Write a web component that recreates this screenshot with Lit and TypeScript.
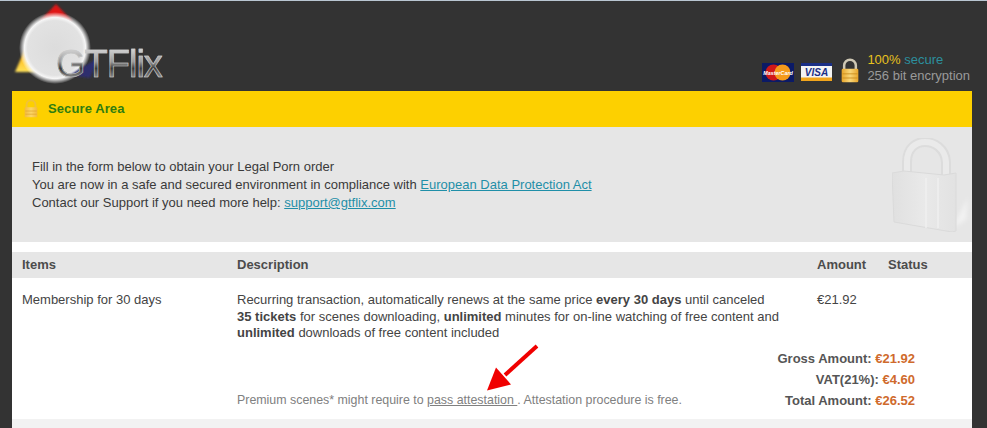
import { LitElement, html, css, svg } from "lit";
import { customElement } from "lit/decorators.js";

const lockSmall = (id: string, w: number, h: number, shackle: string, a: string, b: string, line: string) => svg`
<svg width=${w} height=${h} viewBox="0 0 24 30" aria-hidden="true" style="display:block">
  <defs><linearGradient id=${id} x1="0" y1="0" x2="1" y2="0">
    <stop offset="0" stop-color=${a}/><stop offset=".5" stop-color=${b}/><stop offset="1" stop-color=${a}/>
  </linearGradient></defs>
  <path d="M5 14V9a7 7 0 0 1 14 0v5" fill="none" stroke=${shackle} stroke-width="3"/>
  <rect x="2" y="13" width="20" height="16" rx="1.5" fill="url(#${id})"/>
  <path d="M3 19h18M3 24h18" stroke=${line} stroke-width="1"/>
</svg>`;

@customElement("app-root")
export class AppRoot extends LitElement {
  static styles = css`
    :host { display: block; width: 987px; height: 428px; overflow: hidden; background: #333; font-family: "Liberation Sans", Arial, sans-serif; font-size: 13px; color: #444; }
    .topline { height: 1px; background: #b9c6d2; }
    .header { position: relative; height: 90px; display: flex; justify-content: flex-end; align-items: flex-end; padding-right: 17px; padding-bottom: 8px; box-sizing: border-box; }
    .logo { position: absolute; left: 12px; top: 0; width: 160px; height: 90px; }
    .logotext { position: absolute; left: 44px; top: 41px; font-size: 38px; line-height: 44px; letter-spacing: -1px; background: linear-gradient(#f4f4f4 0%, #9a9a9a 45%, #3a3a3a 60%, #d8d8d8 100%); -webkit-background-clip: text; background-clip: text; color: transparent; -webkit-text-stroke: 0.6px #c8c8c8; }
    .badges { display: flex; align-items: flex-end; }
    .mc { margin-right: 7px; margin-bottom: 1px; display: block; }
    .visa { margin-right: 8px; margin-bottom: 2px; display: block; }
    .lock { margin-right: 7px; display: block; }
    .sec { line-height: 15.5px; color: #9a9a9a; white-space: nowrap; }
    .pct { color: #e8c21e; }
    .secure { color: #2c8f9e; }
    .main { margin: 0 15px 0 12px; width: 960px; }
    .bar { height: 36px; background: #fdd000; display: flex; align-items: center; padding: 0 0 1px 10px; box-sizing: border-box; gap: 8px; color: #2f7d10; font-weight: bold; font-size: 13px; letter-spacing: 0.1px; }
    .intro { height: 115px; background: #e6e6e6; padding: 31px 20px 0; box-sizing: border-box; line-height: 18px; color: #3a3a3a; position: relative; }
    .intro a { color: #1f8fa8; }
    .biglock { position: absolute; right: 0; top: 11px; }
    .content { background: #fff; padding-top: 10px; height: 177px; box-sizing: border-box; }
    .grid { display: grid; grid-template-columns: 225px 580px 71px 84px; }
    .head { height: 26px; padding-bottom: 1px; background: #e6e6e6; font-weight: bold; align-items: center; display: flex; box-sizing: border-box; color: #4c4c4c; }
    .first { padding-left: 10px; }
    .row { padding-top: 14px; line-height: 16.5px; color: #444; }
    .foot { display: flex; justify-content: space-between; align-items: flex-end; padding: 0 57px 0 225px; position: relative; margin-top: 6px; }
    .note { color: #808080; line-height: 14px; padding-bottom: 4px; font-size: 12.4px; }
    .totals { text-align: right; font-weight: bold; color: #555; line-height: 21px; }
    .totals span { color: #cf6a2c; }
    .arrow { position: absolute; left: 470px; top: -7px; }
    .rest { height: 9px; background: #f2f2f2; }
  `;

  render() {
    return html`
      <div class="topline"></div>
      <div class="header">
        <div class="logo">
          <svg width="160" height="90" viewBox="0 0 160 90" aria-hidden="true">
            <defs>
              <radialGradient id="ball" cx=".5" cy=".5" r=".5">
                <stop offset="0" stop-color="#dcdcdc"/><stop offset=".76" stop-color="#e2e2e2"/><stop offset=".85" stop-color="#f6f6f6"/><stop offset="1" stop-color="#ffffff" stop-opacity="0"/>
              </radialGradient>
              <linearGradient id="yel" x1="0" y1="0" x2="0" y2="1"><stop offset="0" stop-color="#ffa800"/><stop offset="1" stop-color="#ffe25a"/></linearGradient>
              <filter id="soft" x="-30%" y="-30%" width="160%" height="160%"><feGaussianBlur stdDeviation="1.2"/></filter>
            </defs>
            <path d="M44 3L28 20h32z" fill="#e01818" filter="url(#soft)"/>
            <path d="M13 48L3 71h28z" fill="url(#yel)" filter="url(#soft)"/>
            <circle cx="43" cy="47" r="36" fill="url(#ball)"/>
            <path d="M58 74l28-17-8 20z" fill="#2e2e6e" filter="url(#soft)"/>
          </svg>
          <div class="logotext">GTFlix</div>
        </div>
        <div class="badges">
          <svg class="mc" width="32" height="19" viewBox="0 0 32 19" aria-hidden="true">
            <rect width="32" height="19" fill="#0b1a66"/>
            <circle cx="11.500" cy="9.500" r="8" fill="#d01818"/><circle cx="20.500" cy="9.500" r="8" fill="#f59a1b"/>
            <text x="16" y="11.500" text-anchor="middle" font-family="Liberation Sans" font-size="5.400" font-weight="bold" font-style="italic" fill="#fff">MasterCard</text>
          </svg>
          <svg class="visa" width="31" height="18" viewBox="0 0 31 18" aria-hidden="true">
            <rect width="31" height="18" fill="#f4f4f4"/><rect width="31" height="3" fill="#1a2f86"/><rect y="14.500" width="31" height="3.500" fill="#f2a51c"/>
            <text x="15.500" y="12.800" text-anchor="middle" font-family="Liberation Sans" font-size="10" font-weight="bold" font-style="italic" fill="#1a2f86">VISA</text>
          </svg>
          <span class="lock">${lockSmall("lk1", 20, 25, "#cfc8b4", "#e8a52a", "#f9d77a", "#c98a1a")}</span>
          <div class="sec"><span class="pct">100%</span> <span class="secure">secure</span><br />256 bit encryption</div>
        </div>
      </div>
      <div class="main">
        <div class="bar">${lockSmall("lk2", 18, 19, "#f0c23a", "#f3b93c", "#fbd668", "#dda22a")}<span>Secure Area</span></div>
        <div class="intro">
          Fill in the form below to obtain your Legal Porn order<br />
          You are now in a safe and secured environment in compliance with <a href="#">European Data Protection Act</a><br />
          Contact our Support if you need more help: <a href="#">support@gtflix.com</a>
          <svg class="biglock" width="80" height="94" viewBox="0 0 80 94" aria-hidden="true">
            <defs>
              <linearGradient id="bl" x1="0" y1="0" x2="1" y2="0"><stop offset="0" stop-color="#e0e0e0"/><stop offset=".5" stop-color="#e9e9e9"/><stop offset="1" stop-color="#e2e2e2"/></linearGradient>
              <filter id="sh" x="-30%" y="-30%" width="160%" height="160%"><feGaussianBlur stdDeviation="2"/></filter>
            </defs>
            <path d="M60 90L74 82 76 60z" fill="#f2f2f2" filter="url(#sh)"/>
            <path d="M15 40V24C15 10 24 4 33 4s20 6 21 20v20" fill="none" stroke="#dcdcdc" stroke-width="10"/>
            <path d="M15 40V24C15 10 24 4 33 4s20 6 21 20v20" fill="none" stroke="#eaeaea" stroke-width="6"/>
            <path d="M0 35l12-2 40 4 12-2v58l-4 1L2 84z" fill="url(#bl)" stroke="#dadada"/>
            <path d="M34 40v50M46 40v50" stroke="#efefef" stroke-width="1.500"/>
          </svg>
        </div>
        <div class="content">
          <div class="grid">
            <div class="head first">Items</div><div class="head">Description</div><div class="head">Amount</div><div class="head">Status</div>
            <div class="row first">Membership for 30 days</div>
            <div class="row">Recurring transaction, automatically renews at the same price <b>every 30 days</b> until canceled<br /><b>35 tickets</b> for scenes downloading, <b>unlimited</b> minutes for on-line watching of free content and<br /><b>unlimited</b> downloads of free content included</div>
            <div class="row">€21.92</div>
            <div class="row"></div>
          </div>
          <div class="foot">
            <div class="note">Premium scenes* might require to <u>pass attestation </u>. Attestation procedure is free.</div>
            <div class="totals">Gross Amount: <span>€21.92</span><br />VAT(21%): <span>€4.60</span><br />Total Amount: <span>€26.52</span></div>
            <svg class="arrow" width="60" height="54" viewBox="0 0 60 54" aria-hidden="true">
              <path d="M55 5L23 34" stroke="#f00000" stroke-width="4" fill="none"/>
              <path d="M14 26.500L5 49.500 29 43.500z" fill="#f00000"/>
            </svg>
          </div>
        </div>
        <div class="rest"></div>
      </div>
    `;
  }
}
